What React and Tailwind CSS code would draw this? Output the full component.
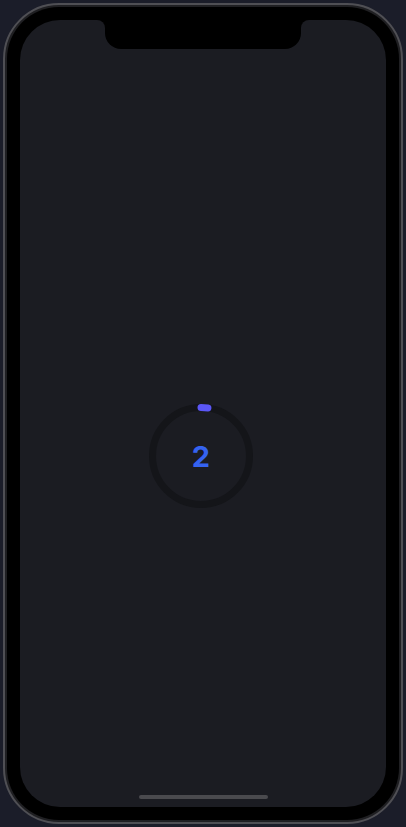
import React from 'react'

function Countdown({ value = 2 }) {
  const r = 48.5
  const c = 2 * Math.PI * r
  return (
    <div className="relative w-[106px] h-[106px] flex items-center justify-center">
      <svg width="106" height="106" viewBox="0 0 106 106" className="absolute inset-0">
        <circle cx="53" cy="53" r={r} fill="none" stroke="#141519" strokeWidth="7" />
        <circle
          cx="53"
          cy="53"
          r={r}
          fill="none"
          stroke="#5b57f6"
          strokeWidth="7"
          strokeLinecap="round"
          strokeDasharray={`7 ${c}`}
          transform="rotate(-90 53 53)"
        />
      </svg>
      <span
        className="relative text-[29px] font-bold text-[#3563f0] leading-none"
        style={{ fontFamily: 'Inter, "Liberation Sans", sans-serif' }}
      >
        {value}
      </span>
    </div>
  )
}

export default function App() {
  return (
    <div className="w-full h-[827px] bg-[#1b1d29] pt-[3px] pl-[3px]">
      <div className="w-[400px] h-[821px] rounded-[56px] border-2 border-[#4f4f54] bg-[#1f1f22] p-[2px]">
        <div className="w-full h-full rounded-[52px] bg-black p-[13px]">
          <div className="relative w-full h-full rounded-[40px] bg-[#1b1c22] overflow-hidden flex flex-col items-center">
            {/* notch with its little corner fillets */}
            <div className="relative shrink-0 w-[196px] h-[29px] bg-black rounded-b-[16px]">
              <div className="absolute top-0 -left-[8px] w-[8px] h-[8px] bg-black">
                <div className="w-full h-full bg-[#1b1c22] rounded-tr-[8px]" />
              </div>
              <div className="absolute top-0 -right-[8px] w-[8px] h-[8px] bg-black">
                <div className="w-full h-full bg-[#1b1c22] rounded-tl-[8px]" />
              </div>
            </div>

            <div className="flex-1 w-full flex items-center justify-center pt-[68px] pr-[4px]">
              <Countdown value={2} />
            </div>

            {/* home indicator */}
            <div className="shrink-0 w-[129px] h-[4px] mb-[8px] rounded-full bg-[#4a4a4e]" />
          </div>
        </div>
      </div>
    </div>
  )
}
